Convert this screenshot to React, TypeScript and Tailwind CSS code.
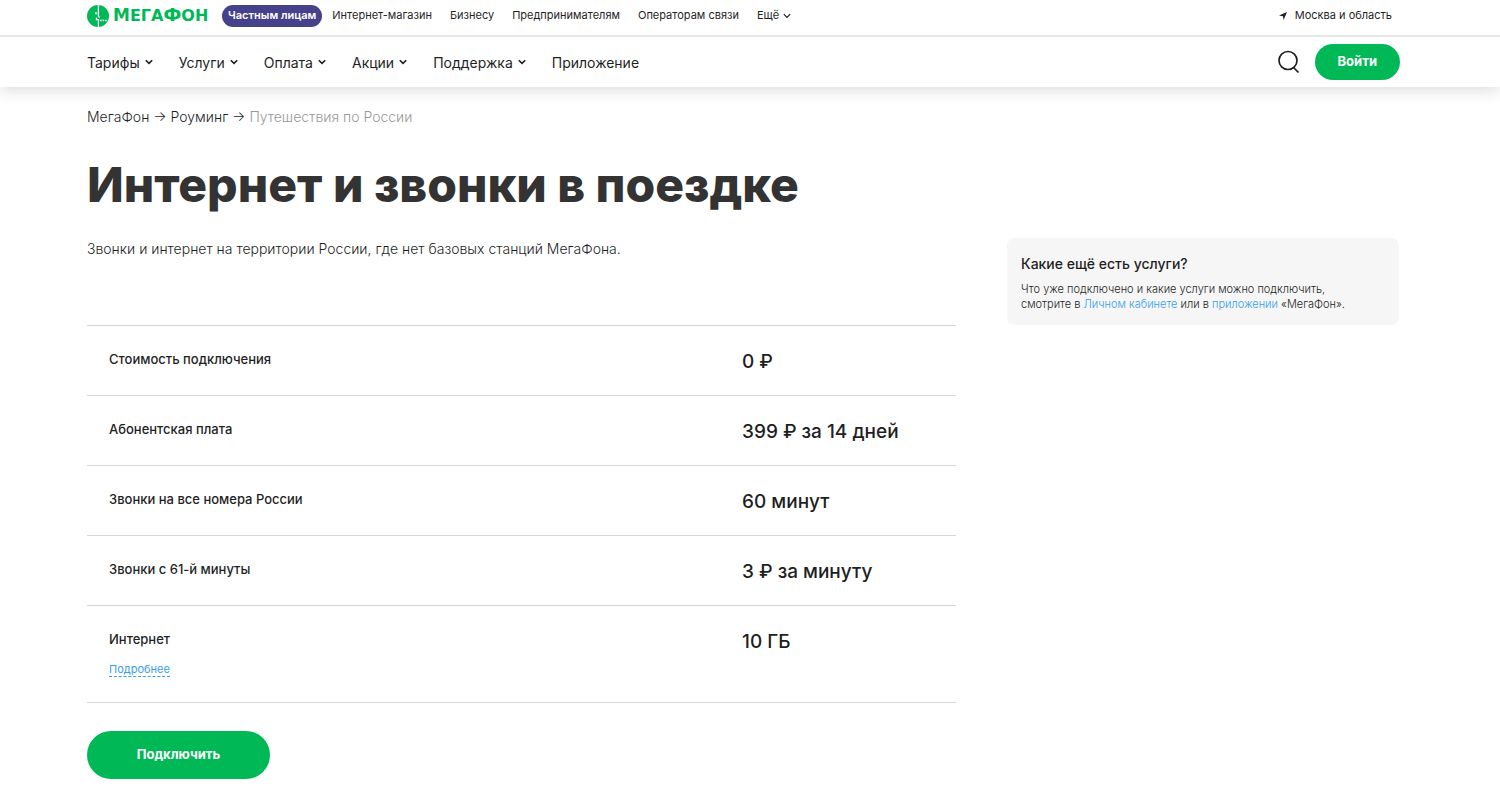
import React from "react";

const topLinks = ["Интернет-магазин", "Бизнесу", "Предпринимателям", "Операторам связи"];

const menu = [
  { label: "Тарифы", nested: true },
  { label: "Услуги", nested: true },
  { label: "Оплата", nested: true },
  { label: "Акции", nested: true },
  { label: "Поддержка", nested: true },
  { label: "Приложение", nested: false },
];

const rows = [
  { name: "Стоимость подключения", value: "0 ₽" },
  { name: "Абонентская плата", value: "399 ₽ за 14 дней" },
  { name: "Звонки на все номера России", value: "60 минут" },
  { name: "Звонки с 61-й минуты", value: "3 ₽ за минуту" },
  { name: "Интернет", value: "10 ГБ", more: true },
];

function Chevron({ thin = false }: { thin?: boolean }) {
  return (
    <svg width="8" height="6" viewBox="0 0 8 6" fill="none" stroke="currentColor" strokeWidth={thin ? 1.2 : 1.6} aria-hidden="true">
      <path d="M0.8 1.2 4 4.4 7.2 1.2" />
    </svg>
  );
}

function Logo() {
  return (
    <a href="#" aria-label="МегаФон" className="flex w-[122px] items-center gap-1 text-[#00b956]">
      <svg width="22" height="22" viewBox="0 0 22 22" className="shrink-0" aria-hidden="true">
        <circle cx="11" cy="11" r="11" fill="currentColor" />
        <path d="M11.4 0V10.8L12.4 12.6" stroke="#fff" strokeWidth="1.3" fill="none" />
        <path d="M9 7V9.4" stroke="#fff" strokeWidth="1.3" fill="none" />
        <path d="M9.4 12.4V14.6H11.4V22" stroke="#fff" strokeWidth="1.2" fill="none" />
        <circle cx="13.8" cy="15.4" r="0.95" fill="#fff" />
        <circle cx="16.4" cy="15.4" r="0.95" fill="#fff" />
        <circle cx="19" cy="15.4" r="0.95" fill="#fff" />
      </svg>
      <span className="font-['DejaVu_Sans',sans-serif] text-[16px] leading-5 font-bold whitespace-nowrap">
        <span className="text-[17px]">М</span>ЕГА<span className="text-[18px]">Ф</span>ОН
      </span>
    </a>
  );
}

export default function App() {
  return (
    <div className="min-h-screen bg-white font-['Inter','Noto_Sans',sans-serif] text-[#1f1f1f]">
      <header className="shadow-[0_2px_16px_rgba(0,0,0,0.16)]">
        <div className="flex h-[37px] items-center border-b-2 border-[#e6e6e6] pr-[108px] pb-1 pl-[87px] text-[11px]">
          <Logo />
          <a href="#" className="ml-[13px] flex h-[22px] items-center rounded-full bg-[#45418a] px-[6px] font-semibold text-white">
            Частным лицам
          </a>
          <nav aria-label="Разделы" className="ml-[10px] flex items-center gap-[18px]">
            {topLinks.map((t) => (
              <a key={t} href="#">
                {t}
              </a>
            ))}
            <button type="button" className="flex items-center gap-1">
              Ещё <Chevron thin />
            </button>
          </nav>
          <button type="button" className="ml-auto flex items-center gap-2">
            <svg width="8" height="8" viewBox="0 0 8 8" fill="currentColor" aria-hidden="true">
              <path d="M8 0 4.6 8 4 4.3 0 3.6Z" />
            </svg>
            Москва и область
          </button>
        </div>
        <div className="flex h-[50px] items-center pr-[100px] pl-[87px]">
          <nav aria-label="Основное меню" className="flex items-center gap-[26px] text-[14px]">
            {menu.map((m) => (
              <a key={m.label} href="#" className="flex items-center gap-[5px]">
                {m.label}
                {m.nested && <Chevron />}
              </a>
            ))}
          </nav>
          <button type="button" aria-label="Поиск" className="ml-auto">
            <svg width="22" height="24" viewBox="0 0 22 24" fill="none" stroke="currentColor" strokeWidth="1.7" aria-hidden="true">
              <circle cx="10" cy="10.5" r="9" />
              <path d="M15.5 17.5 20.5 22.5" />
            </svg>
          </button>
          <button type="button" className="ml-[15px] h-9 rounded-full bg-[#00b956] px-[23px] text-[13px] font-bold text-white">
            Войти
          </button>
        </div>
      </header>

      <main className="pr-[101px] pb-4 pl-[87px]">
        <nav aria-label="Навигационная цепочка" className="pt-5 text-[14px] leading-5 font-light">
          <a href="#">МегаФон</a> → <a href="#">Роуминг</a> → <span className="text-[#999]">Путешествия по России</span>
        </nav>
        <h1 className="mt-7 text-[48px] leading-[60px] font-extrabold text-[#333]">Интернет и звонки в поездке</h1>
        <div className="mt-[23px] grid grid-cols-[869fr_392fr] items-start gap-x-[51px]">
          <div>
            <p className="text-[14px] leading-[22px] font-light">
              Звонки и интернет на территории России, где нет базовых станций МегаФона.
            </p>
            <table className="mt-[65px] w-full border-t border-[#d8d8d8]">
              <tbody>
                {rows.map((r) => (
                  <tr key={r.name} className="border-b border-[#d8d8d8] align-top">
                    <th scope="row" className="pt-[22px] pb-[25px] pl-[22px] text-left text-[13px] leading-[22px] font-medium">
                      {r.name}
                      {r.more && (
                        <button
                          type="button"
                          className="mt-3 block border-b border-dashed border-[#36a0ea] text-[11px] leading-[14px] font-normal text-[#36a0ea]"
                        >
                          Подробнее
                        </button>
                      )}
                    </th>
                    <td className="w-[214px] pt-6 text-[19px] leading-6 font-medium">{r.value}</td>
                  </tr>
                ))}
              </tbody>
            </table>
            <button type="button" className="mt-7 h-12 w-[183px] rounded-full bg-[#00b956] text-[13px] font-bold text-white">
              Подключить
            </button>
          </div>
          <aside className="rounded-lg bg-[#f6f6f6] px-[14px] pt-4 pb-[13px]">
            <h2 className="text-[14px] leading-5 font-medium">Какие ещё есть услуги?</h2>
            <p className="mt-2 text-[11px] leading-[15px] font-light">
              Что уже подключено и какие услуги можно подключить,
              <br />
              смотрите в{" "}
              <a href="#" className="text-[#36a0ea]">
                Личном кабинете
              </a>{" "}
              или в{" "}
              <a href="#" className="text-[#36a0ea]">
                приложении
              </a>{" "}
              «МегаФон».
            </p>
          </aside>
        </div>
      </main>
    </div>
  );
}
